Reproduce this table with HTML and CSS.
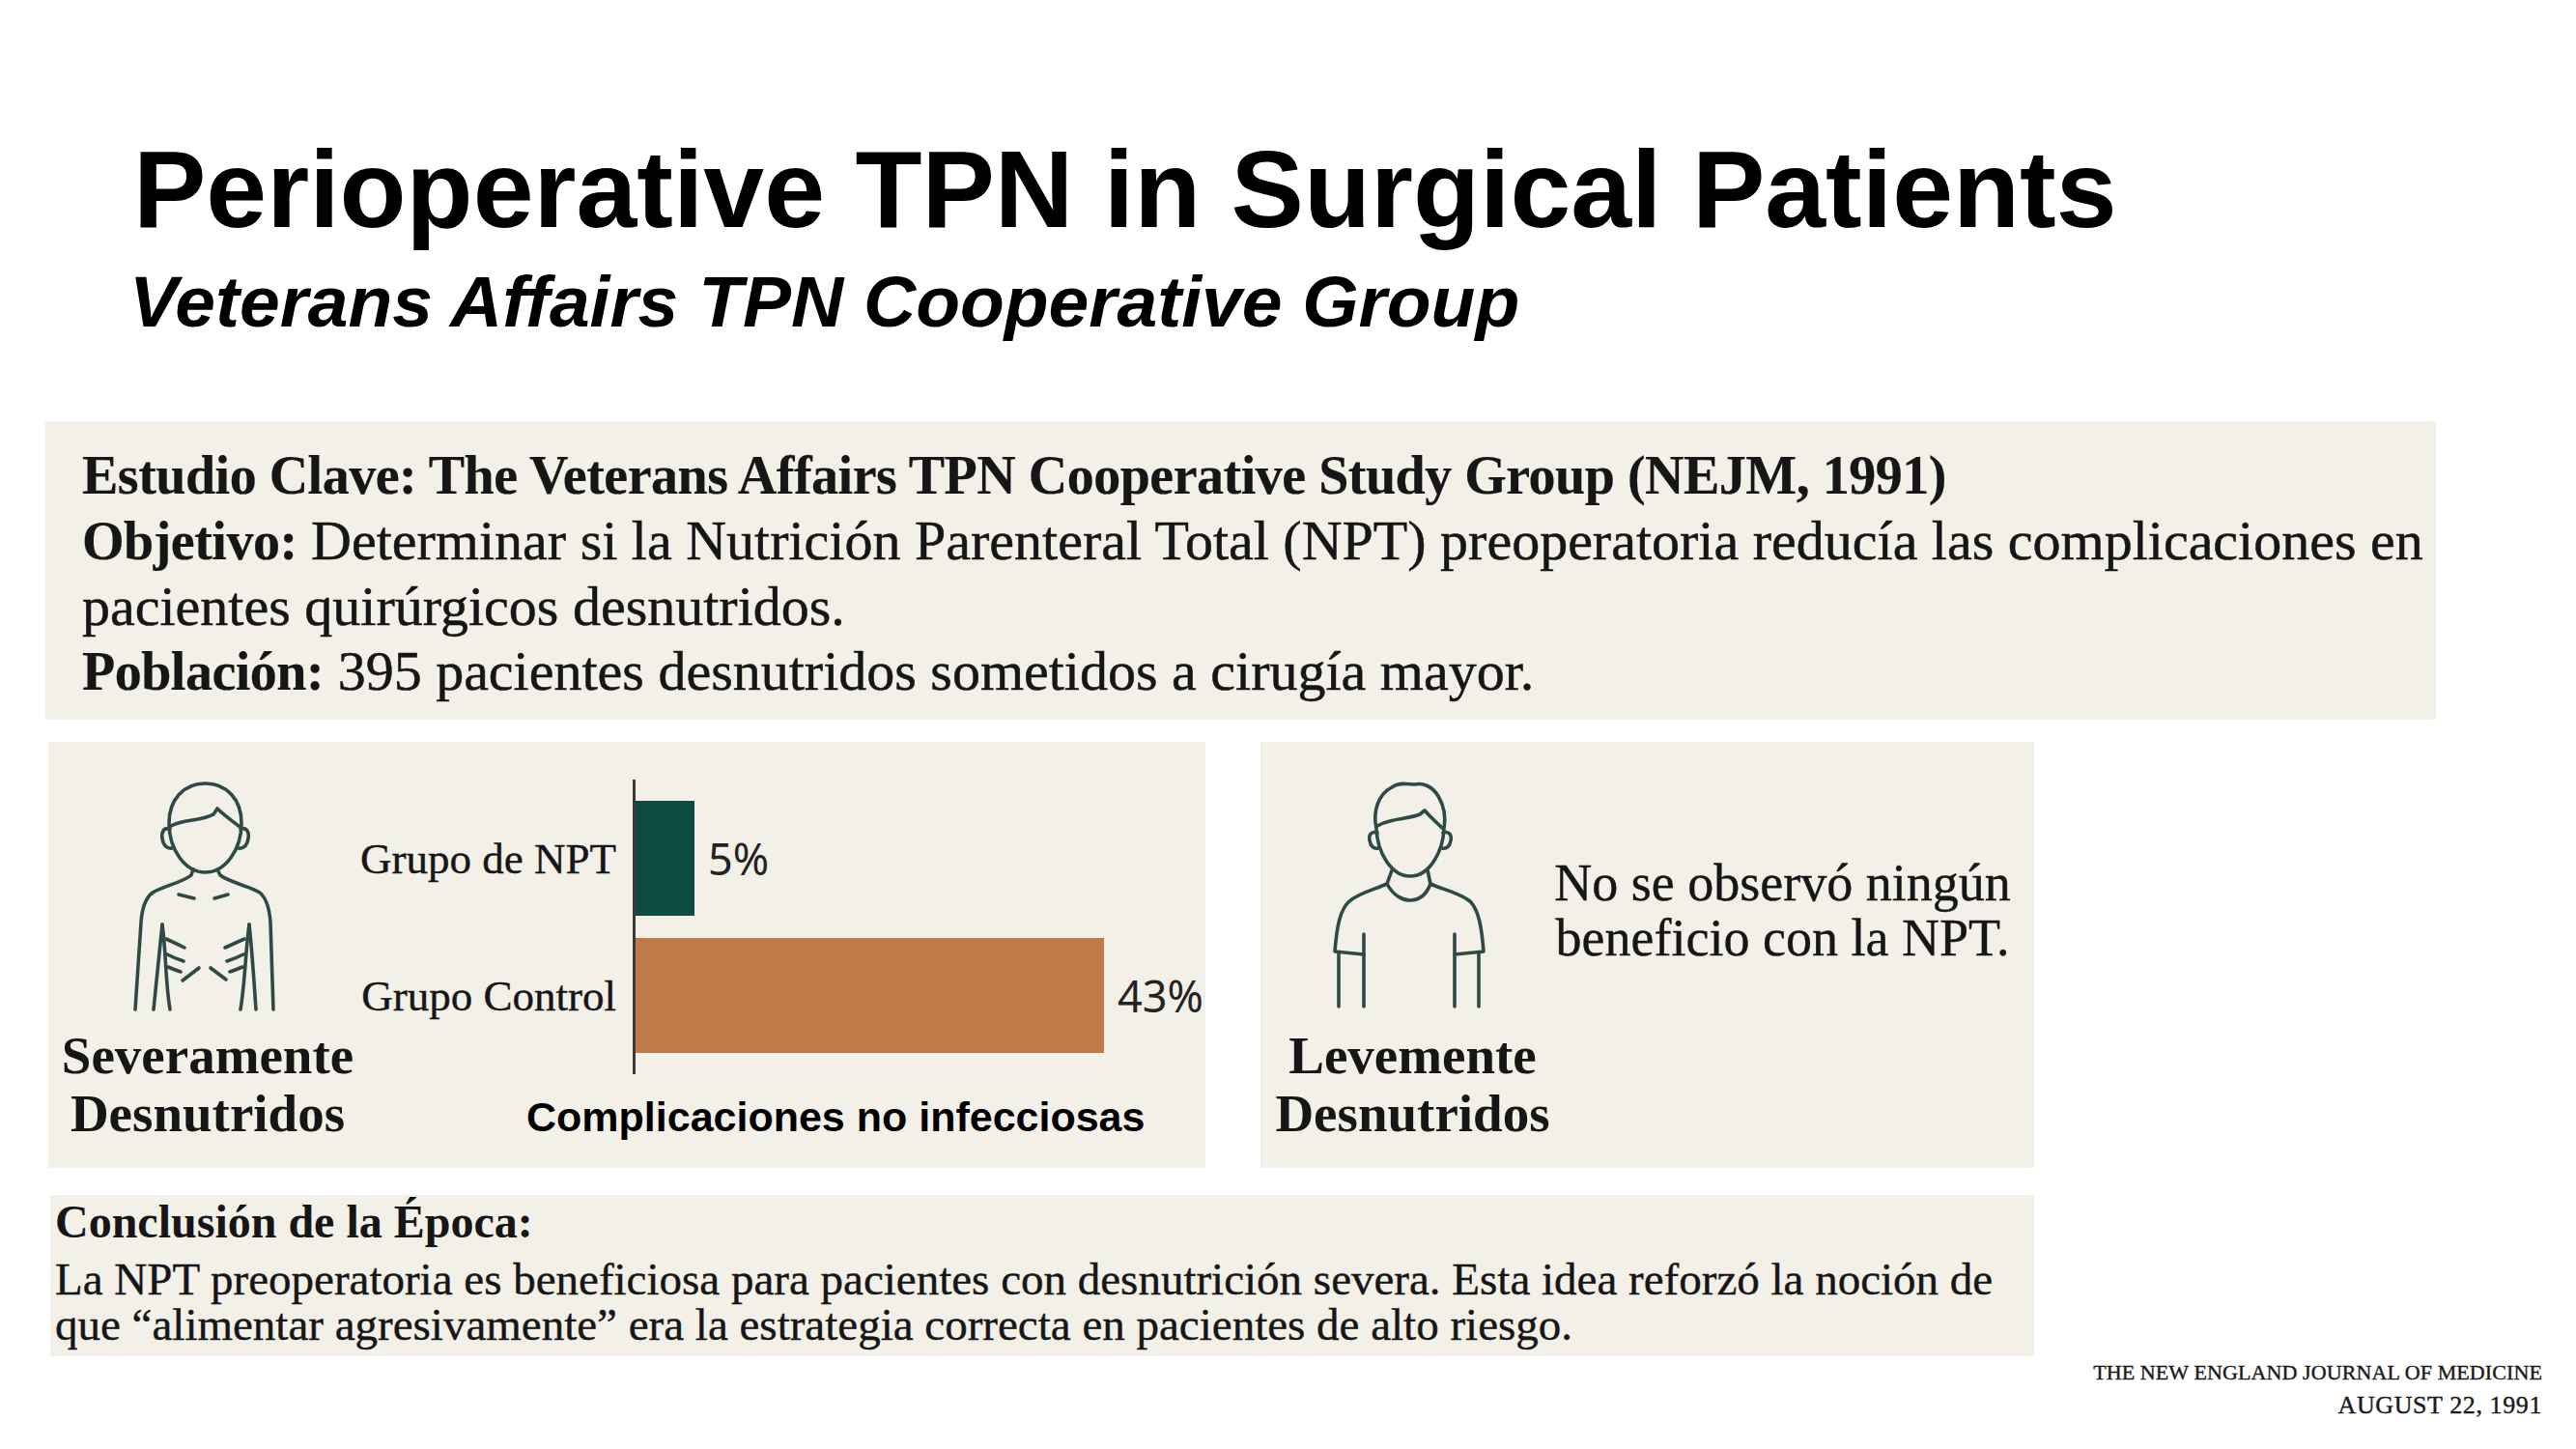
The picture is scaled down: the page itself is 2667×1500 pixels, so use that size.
FILE: index.html
```html
<!DOCTYPE html>
<html lang="es">
<head>
<meta charset="utf-8">
<title>Perioperative TPN in Surgical Patients</title>
<link rel="stylesheet" href="styles.css">
</head>
<body>
<header class="head">
  <h1 class="title">Perioperative TPN in Surgical Patients</h1>
  <p class="subtitle">Veterans Affairs TPN Cooperative Group</p>
</header>

<section class="study">
  <div class="ln"><b>Estudio Clave: The Veterans Affairs TPN Cooperative Study Group (NEJM, 1991)</b></div>
  <div class="ln"><b>Objetivo:</b> Determinar si la Nutrición Parenteral Total (NPT) preoperatoria reducía las complicaciones en</div>
  <div class="ln">pacientes quirúrgicos desnutridos.</div>
  <div class="ln"><b>Población:</b> 395 pacientes desnutridos sometidos a cirugía mayor.</div>
</section>

<div class="panels">
  <div class="row">
    <div class="card severe">
      <div class="figcol">
        <svg class="person" viewBox="0 0 180 255" width="180" height="255" aria-hidden="true">
          <g fill="none" stroke="#2f4946" stroke-width="3.6" stroke-linecap="round" stroke-linejoin="round">
            <path d="M87.5,11 C110,11 125,28 125,52 C125,80 108,103 87.5,103 C67,103 50,80 50,52 C50,28 65,11 87.5,11 Z"/>
            <path d="M52,55 C64,48 84,50 96,43 L100,37 C106,43 113,48 122,55"/>
            <path d="M51,58 C44,56 42,62 43,68 C44,75 48,79 53,78"/>
            <path d="M124,58 C131,56 133,62 132,68 C131,75 127,79 122,78"/>
            <path d="M75,100 L73,106 C65,113 45,117 33,124 C25,130 22,140 21,155 L15,245"/>
            <path d="M100,100 L103,106 C112,113 132,117 144,124 C151,130 154,140 155,155 L158,245"/>
            <path d="M43,157 C40,185 37,215 34,245"/>
            <path d="M43,157 C47,185 46,215 51,245"/>
            <path d="M133,157 C136,185 138,215 140,245"/>
            <path d="M133,157 C129,185 129,215 124,245"/>
            <path d="M60,126 L76,130"/>
            <path d="M97,130 L111,126"/>
            <path d="M47,172 Q56,176 66,181"/>
            <path d="M48,188 Q56,192 65,195"/>
            <path d="M49,201 Q56,204 62,206"/>
            <path d="M128,172 Q119,176 108,181"/>
            <path d="M127,188 Q119,192 110,195"/>
            <path d="M126,201 Q119,204 113,206"/>
            <path d="M64,215 L81,202"/>
            <path d="M93,202 L109,214"/>
          </g>
        </svg>
        <div class="figlabel">Severamente<br>Desnutridos</div>
      </div>
      <div class="chart">
        <div class="plot">
          <div class="cats">
            <div class="cat">Grupo de NPT</div>
            <div class="cat">Grupo Control</div>
          </div>
          <div class="bars">
            <div class="barrow"><div class="bar npt" style="width:61px"></div><span class="val">5%</span></div>
            <div class="barrow"><div class="bar ctl" style="width:485px"></div><span class="val">43%</span></div>
          </div>
        </div>
        <div class="caption">Complicaciones no infecciosas</div>
      </div>
    </div>

    <div class="card mild">
      <div class="figcol">
        <svg class="person" viewBox="0 0 180 255" width="180" height="255" aria-hidden="true">
          <g fill="none" stroke="#2f4946" stroke-width="3.6" stroke-linecap="round" stroke-linejoin="round">
            <path d="M52,58 C48,40 54,22 68,15 C76,9 86,12 92,12 C100,10 110,14 116,24 C122,34 124,46 122,58 C121,80 108,107 87,107 C67,107 53,82 52,58 Z"/>
            <path d="M53,55 C66,47 86,48 97,43 L102,39 C108,46 114,51 120,57"/>
            <path d="M53,62 C46,60 44,65 45,70 C46,76 49,79 54,78"/>
            <path d="M121,62 C128,60 130,65 129,70 C128,76 125,79 120,78"/>
            <path d="M68,101 L63,115"/>
            <path d="M105,101 L108,115"/>
            <path d="M63,115 C70,128 80,132 87,132 C95,132 103,128 108,115"/>
            <path d="M63,115 C50,121 34,124 24,133 C14,142 11,160 9,185 L39,188"/>
            <path d="M108,115 C121,121 138,124 149,133 C158,142 161,160 163,185 L133,188"/>
            <path d="M13,187 L13,242"/>
            <path d="M39,167 L39,242"/>
            <path d="M158,187 L158,242"/>
            <path d="M133,167 L133,242"/>
          </g>
        </svg>
        <div class="figlabel">Levemente<br>Desnutridos</div>
      </div>
      <div class="note">No se observó ningún<br>beneficio con la NPT.</div>
    </div>
  </div>

  <section class="conclusion">
    <div class="c-head">Conclusión de la Época:</div>
    <div class="c-body">La NPT preoperatoria es beneficiosa para pacientes con desnutrición severa. Esta idea reforzó la noción de<br>que “alimentar agresivamente” era la estrategia correcta en pacientes de alto riesgo.</div>
  </section>
</div>

<footer class="journal">
  <div class="j1">THE NEW ENGLAND JOURNAL OF MEDICINE</div>
  <div class="j2">AUGUST 22, 1991</div>
</footer>
</body>
</html>
```

FILE: styles.css
```css
html, body {
  margin: 0;
  padding: 0;
  width: 2667px;
  height: 1500px;
  overflow: hidden;
  background: #ffffff;
}

body {
  font-family: "Liberation Sans", Arial, sans-serif;
  color: #000;
}

/* ---------- header ---------- */
.head {
  padding: 140px 0 0 138px;
}

.title {
  margin: 0;
  font-family: "Liberation Sans", Arial, sans-serif;
  font-weight: bold;
  font-size: 113px;
  line-height: 113px;
  color: #000;
  white-space: nowrap;
}

.subtitle {
  margin: 22px 0 0 -4px;
  font-family: "Liberation Sans", Arial, sans-serif;
  font-weight: bold;
  font-style: italic;
  font-size: 75px;
  line-height: 74px;
  white-space: nowrap;
}

/* ---------- study box ---------- */
.study {
  box-sizing: border-box;
  margin: 87px 0 0 47px;
  width: 2475px;
  height: 309px;
  padding: 22px 0 0 38px;
  overflow: hidden;
  background: #f3f0e8;
  font-family: "Liberation Serif", "Times New Roman", serif;
  font-size: 58px;
  line-height: 67px;
  color: #161616;
  -webkit-text-stroke: 0.5px #161616;
}

.study .ln {
  white-space: nowrap;
}

.study b {
  font-size: 56px;
  letter-spacing: -0.5px;
  -webkit-text-stroke: 0.2px #161616;
}

/* ---------- panels ---------- */
.panels {
  margin: 23px 0 0 50px;
  width: 2056px;
}

.row {
  display: flex;
  gap: 57px;
  height: 441px;
}

.card {
  display: flex;
  background: #f3f0e8;
  font-family: "Liberation Serif", "Times New Roman", serif;
  color: #161616;
}

.severe {
  width: 1198px;
}

.mild {
  width: 801px;
}

.figcol {
  box-sizing: border-box;
  flex: none;
  padding-top: 32px;
}

.severe .figcol {
  width: 320px;
  padding-left: 10px;
}

.mild .figcol {
  width: 310px;
  padding-left: 5px;
}

.person {
  display: block;
  margin: 0 auto;
}

.figlabel {
  margin-top: 8px;
  text-align: center;
  font-weight: bold;
  font-size: 55px;
  line-height: 60px;
  white-space: nowrap;
}

/* ---------- chart ---------- */
.chart {
  flex: 1;
  padding-top: 39px;
}

.plot {
  display: flex;
}

.cats {
  box-sizing: border-box;
  width: 285px;
  padding: 22px 17px 22px 0;
  display: flex;
  flex-direction: column;
  gap: 23px;
}

.cat {
  height: 119px;
  display: flex;
  align-items: center;
  justify-content: flex-end;
  font-size: 45px;
  line-height: 44px;
  white-space: nowrap;
  -webkit-text-stroke: 0.4px #161616;
}

.bars {
  border-left: 3px solid #3b3b3b;
  padding: 22px 0;
  display: flex;
  flex-direction: column;
  gap: 23px;
}

.barrow {
  height: 119px;
  display: flex;
  align-items: center;
}

.bar {
  height: 119px;
}

.npt {
  background: #0d4c41;
}

.ctl {
  background: #bf7a48;
}

.val {
  padding: 0 0 0 14px;
  font-family: "Noto Sans", "Open Sans", sans-serif;
  font-size: 45px;
  line-height: 44px;
  color: #232323;
  white-space: nowrap;
}

.caption {
  margin-top: 19px;
  padding-left: 175px;
  font-family: "Liberation Sans", Arial, sans-serif;
  font-weight: bold;
  font-size: 43px;
  line-height: 50px;
  color: #000;
  white-space: nowrap;
}

/* ---------- mild note ---------- */
.note {
  flex: 1;
  margin-left: -30px;
  padding-top: 118px;
  text-align: center;
  font-size: 54px;
  line-height: 57px;
  white-space: nowrap;
  -webkit-text-stroke: 0.4px #161616;
}

/* ---------- conclusion ---------- */
.conclusion {
  box-sizing: border-box;
  margin: 28px 0 0 2px;
  width: 2054px;
  height: 167px;
  padding: 2px 0 0 5px;
  background: #f3f0e8;
  font-family: "Liberation Serif", "Times New Roman", serif;
  color: #161616;
}

.c-head {
  font-weight: bold;
  font-size: 48px;
  line-height: 52px;
  white-space: nowrap;
}

.c-body {
  margin-top: 10px;
  font-size: 47px;
  line-height: 47px;
  white-space: nowrap;
  -webkit-text-stroke: 0.4px #161616;
}

/* ---------- journal footer ---------- */
.journal {
  margin-top: 4px;
  padding-right: 35px;
  text-align: right;
  font-family: "Liberation Serif", "Times New Roman", serif;
  color: #1a1a1a;
  -webkit-text-stroke: 0.4px #1a1a1a;
}

.j1 {
  font-size: 22px;
  line-height: 26px;
  letter-spacing: 0.1px;
  white-space: nowrap;
}

.j2 {
  margin-top: 3px;
  font-size: 26px;
  line-height: 35px;
  letter-spacing: 0.6px;
  white-space: nowrap;
}
```
